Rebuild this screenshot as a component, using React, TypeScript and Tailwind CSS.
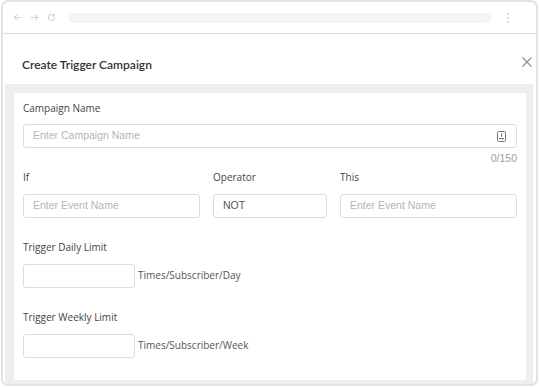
import React from "react";

const label = "text-[10px] text-[#444] font-['Open_Sans',sans-serif] leading-none";
const box =
  "h-[24px] rounded-[3px] border border-[#dcdcdc] bg-white flex items-center px-[9px] text-[10.5px] font-['Liberation_Sans',Arial,sans-serif]";

function Field({ text, placeholder, className }: { text?: string; placeholder?: string; className: string }) {
  return (
    <div className={`${box} ${className}`}>
      {placeholder && <span className="text-[#b5b5b5]">{placeholder}</span>}
      {text && <span className="text-[#555]">{text}</span>}
    </div>
  );
}

function BrowserBar() {
  return (
    <div className="flex h-[32px] items-center border-b border-[#dedee2] pl-[10px]">
      <div className="flex items-center gap-[8px] text-[#d2d2d6]">
        <svg width="9" height="9" viewBox="0 0 10 10" fill="none" stroke="currentColor" strokeWidth="1.2">
          <path d="M9 5H1.5M4.5 2L1.5 5l3 3" />
        </svg>
        <svg width="9" height="9" viewBox="0 0 10 10" fill="none" stroke="currentColor" strokeWidth="1.2">
          <path d="M1 5h7.5M5.5 2l3 3-3 3" />
        </svg>
        <svg width="9" height="9" viewBox="0 0 10 10" fill="none" stroke="currentColor" strokeWidth="1.2">
          <path d="M8.5 5A3.5 3.5 0 1 1 7.4 2.4M8.4 1v2.2H6.2" />
        </svg>
      </div>
      <div className="ml-[12px] h-[10px] w-[423px] rounded-full bg-[#f4f4f6]" />
      <div className="ml-[16px] flex flex-col gap-[2px]">
        <span className="h-[2px] w-[2px] rounded-full bg-[#d0d0d4]" />
        <span className="h-[2px] w-[2px] rounded-full bg-[#d0d0d4]" />
        <span className="h-[2px] w-[2px] rounded-full bg-[#d0d0d4]" />
      </div>
    </div>
  );
}

export default function App() {
  return (
    <div className="h-[387px] w-[540px] overflow-hidden bg-white pl-[1px] pr-[2px] pt-0 pb-[1px]">
      <div className="flex h-full flex-col rounded-[7px] border-2 border-[#e2e2e6] bg-white">
        <BrowserBar />
        <div className="flex h-[50px] items-start justify-between pl-[19px] pr-[4px] pt-[22px]">
          <h2 className="text-[12px] leading-[17px] font-semibold text-[#333] font-['Lato',sans-serif]">
            Create Trigger Campaign
          </h2>
          <svg width="10" height="10" viewBox="0 0 10 10" stroke="#8a8a8a" strokeWidth="1.1" className="mt-[1px]">
            <path d="M0.5 0.5l9 9M9.5 0.5l-9 9" />
          </svg>
        </div>
        <div className="ml-[2px] mr-[3px] flex-1 bg-[#eeeeee] pl-[9px] pr-[7px] pt-[9px] pb-[4px]">
          <div className="h-full bg-white pl-[9px] pr-[9px] pt-[10px]">
            <p className={label}>Campaign Name</p>
            <div className={`${box} mt-[11px] justify-between`}>
              <span className="text-[#b5b5b5]">Enter Campaign Name</span>
              <svg width="9" height="11" viewBox="0 0 9 11" fill="none" className="mr-[1px]">
                <rect x="0.5" y="0.5" width="8" height="10" rx="1" stroke="#777" />
                <rect x="4" y="2.3" width="1" height="3.6" fill="#777" />
                <rect x="2" y="7" width="5" height="1.2" fill="#777" />
              </svg>
            </div>
            <p className="mt-[5px] text-right text-[10.5px] leading-none text-[#9a9a9a] font-['Liberation_Sans',Arial,sans-serif]">
              0/150
            </p>
            <div className="mt-[8px] flex gap-[13px]">
              <div className="w-[177px]">
                <p className={label}>If</p>
                <Field className="mt-[12px]" placeholder="Enter Event Name" />
              </div>
              <div className="w-[114px]">
                <p className={label}>Operator</p>
                <Field className="mt-[12px]" text="NOT" />
              </div>
              <div className="flex-1">
                <p className={label}>This</p>
                <Field className="mt-[12px]" placeholder="Enter Event Name" />
              </div>
            </div>
            <p className={`${label} mt-[24px]`}>Trigger Daily Limit</p>
            <div className="mt-[12px] flex items-center gap-[3px]">
              <Field className="w-[112px]" />
              <span className="text-[10px] text-[#555] font-['Open_Sans',sans-serif]">Times/Subscriber/Day</span>
            </div>
            <p className={`${label} mt-[24px]`}>Trigger Weekly Limit</p>
            <div className="mt-[12px] flex items-center gap-[3px]">
              <Field className="w-[112px]" />
              <span className="text-[10px] text-[#555] font-['Open_Sans',sans-serif]">Times/Subscriber/Week</span>
            </div>
          </div>
        </div>
      </div>
    </div>
  );
}
